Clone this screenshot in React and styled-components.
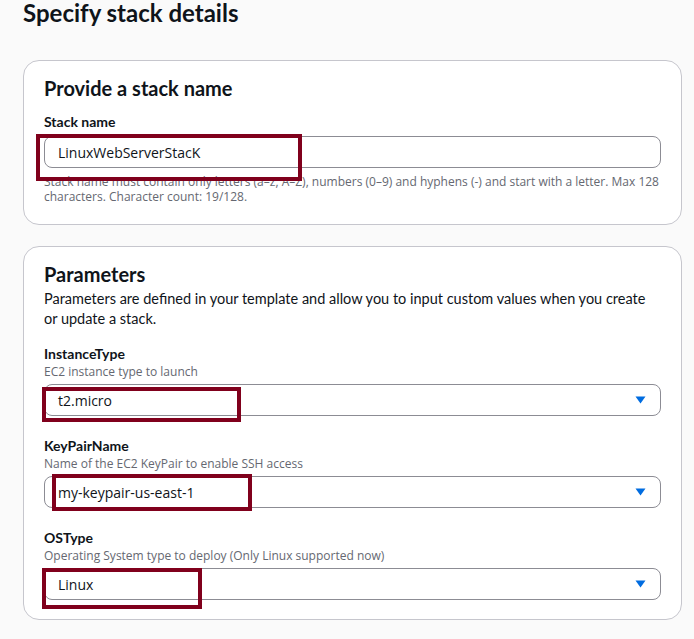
import React from "react";
import styled, { createGlobalStyle } from "styled-components";

const Global = createGlobalStyle`
  body {
    margin: 0;
    background: #fafafa;
    font-family: "Open Sans", "Noto Sans", sans-serif;
    color: #0f141a;
  }
`;

const Page = styled.div`
  padding: 0 12px 20px 23px;
  display: flex;
  flex-direction: column;
  gap: 21px;
`;

const Title = styled.h1`
  margin: 0;
  font-family: Lato, "Open Sans", sans-serif;
  font-size: 24px;
  line-height: 26px;
  font-weight: 700;
`;

const Card = styled.section`
  background: #fff;
  border: 1px solid #c6c6cd;
  border-radius: 16px;
  padding: ${(p) => p.$pad || "15px 20px 19px"};
  display: flex;
  flex-direction: column;
  margin-top: ${(p) => p.$top || 0}px;
`;

const CardTitle = styled.h2`
  margin: 0;
  font-family: Lato, "Open Sans", sans-serif;
  font-size: 20px;
  line-height: 24px;
  font-weight: 700;
`;

const CardText = styled.p`
  margin: 3px 0 0;
  font-family: Lato, "Open Sans", sans-serif;
  font-size: 14.5px;
  line-height: 20px;
  color: #0f141a;
`;

const Field = styled.div`
  position: relative;
  display: flex;
  flex-direction: column;
  margin-top: ${(p) => p.$top}px;
`;

const Label = styled.label`
  font-family: Lato, "Open Sans", sans-serif;
  font-size: 14px;
  line-height: 20px;
  font-weight: 700;
`;

const Desc = styled.div`
  font-size: 12px;
  line-height: 16px;
  color: #656871;
`;

const Hint = styled(Desc)`
  margin-top: 6px;
  line-height: 15px;
`;

const Box = styled.div`
  margin-top: 4px;
  height: 32px;
  box-sizing: border-box;
  border: 1px solid #8c8c94;
  border-radius: 8px;
  background: #fff;
  display: flex;
  align-items: center;
  justify-content: space-between;
  padding: 0 14px 0 13px;
  font-size: 14px;
`;

const Caret = styled.svg`
  width: 11px;
  height: 8px;
`;

const Mark = styled.div`
  position: absolute;
  left: ${(p) => p.$x}px;
  top: ${(p) => p.$y}px;
  width: ${(p) => p.$w}px;
  height: ${(p) => p.$h}px;
  box-sizing: border-box;
  border: 4px solid #80001c;
  pointer-events: none;
`;

const Select = ({ value }) => (
  <Box>
    <span>{value}</span>
    <Caret viewBox="0 0 11 8">
      <path d="M0.5 0.5h10L5.5 7.5z" fill="#006ce0" />
    </Caret>
  </Box>
);

const params = [
  { name: "InstanceType", desc: "EC2 instance type to launch", value: "t2.micro", top: 15, mark: [-2, 43, 199, 35] },
  { name: "KeyPairName", desc: "Name of the EC2 KeyPair to enable SSH access", value: "my-keypair-us-east-1", top: 20, mark: [8, 38, 200, 37] },
  { name: "OSType", desc: "Operating System type to deploy (Only Linux supported now)", value: "Linux", top: 20, mark: [-2, 40, 160, 41] },
];

export default function App() {
  return (
    <>
      <Global />
      <Page>
        <Title>Specify stack details</Title>
        <Card $top={13} $pad="15px 20px 20px">
          <CardTitle>Provide a stack name</CardTitle>
          <Field $top={12}>
            <Label>Stack name</Label>
            <Box>LinuxWebServerStacK</Box>
            <Hint>
              Stack name must contain only letters (a–z, A–Z), numbers (0–9) and hyphens (-) and start with a letter. Max 128 characters. Character count: 19/128.
            </Hint>
            <Mark $x={-8} $y={22} $w={266} $h={47} />
          </Field>
        </Card>
        <Card>
          <CardTitle>Parameters</CardTitle>
          <CardText>
            Parameters are defined in your template and allow you to input custom values when you create or update a stack.
          </CardText>
          {params.map((p) => (
            <Field key={p.name} $top={p.top}>
              <Label>{p.name}</Label>
              <Desc>{p.desc}</Desc>
              <Select value={p.value} />
              <Mark $x={p.mark[0]} $y={p.mark[1]} $w={p.mark[2]} $h={p.mark[3]} />
            </Field>
          ))}
        </Card>
      </Page>
    </>
  );
}
